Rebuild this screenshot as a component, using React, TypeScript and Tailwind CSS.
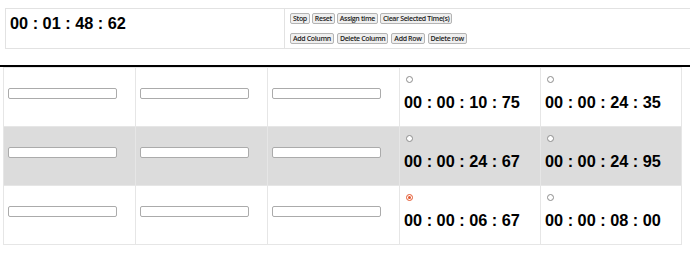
import type { ReactNode } from "react";

const rows = [
  { shade: false, times: ["00 : 00 : 10 : 75", "00 : 00 : 24 : 35"], picked: -1 },
  { shade: true, times: ["00 : 00 : 24 : 67", "00 : 00 : 24 : 95"], picked: -1 },
  { shade: false, times: ["00 : 00 : 06 : 67", "00 : 00 : 08 : 00"], picked: 0 },
];

function Btn({ children }: { children: ReactNode }) {
  return (
    <button className="h-[11px] px-[2px] border border-[#b4b4b4] rounded-[2px] bg-[#efefef] text-[7px] leading-none text-[#222] font-['Open_Sans',sans-serif] font-semibold tracking-[-0.35px]">
      {children}
    </button>
  );
}

function Radio({ on }: { on: boolean }) {
  return on ? (
    <span className="w-[7px] h-[7px] rounded-full border border-[#e4572e] grid place-items-center">
      <span className="w-[3px] h-[3px] rounded-full bg-[#e4572e]" />
    </span>
  ) : (
    <span className="w-[7px] h-[7px] rounded-full border border-[#8c8c8c] bg-white" />
  );
}

export default function App() {
  return (
    <div className="w-[690px] h-[257px] bg-white font-['Liberation_Sans',Arial,sans-serif] text-black overflow-hidden">
      <div className="pt-2 pl-[5px]">
        <div className="flex h-[41px] border border-[#e2e2e2] w-[690px]">
          <div className="w-[279px] border-r border-[#e2e2e2] pl-[4px] pt-[6px]">
            <div className="text-[16.3px] leading-none font-bold">00 : 01 : 48 : 62</div>
          </div>
          <div className="flex flex-col gap-[9px] pl-[5px] pt-[4px]">
            <div className="flex gap-[2px]">
              <Btn>Stop</Btn>
              <Btn>Reset</Btn>
              <Btn>Assign time</Btn>
              <Btn>Clear Selected Time(s)</Btn>
            </div>
            <div className="flex gap-[3px]">
              <Btn>Add Column</Btn>
              <Btn>Delete Column</Btn>
              <Btn>Add Row</Btn>
              <Btn>Delete row</Btn>
            </div>
          </div>
        </div>
      </div>

      <div className="mt-4 h-[2px] bg-black" />

      <div className="ml-[3px] w-[679px] grid grid-cols-[132px_132px_132px_141px_141px] border-l border-t border-[#e6e6e6]">
        {rows.map((r, i) => (
          <div key={i} className="contents">
            {[0, 1, 2].map((c) => (
              <div
                key={c}
                className={`h-[59px] border-r border-b border-[#e6e6e6] pl-[4px] pt-[20px] ${r.shade ? "bg-[#dcdcdc]" : "bg-white"}`}
              >
                <div className="w-[109px] h-[11px] border border-[#ababab] rounded-[2px] bg-white" />
              </div>
            ))}
            {r.times.map((t, k) => (
              <div
                key={k}
                className={`h-[59px] border-r border-b border-[#e6e6e6] pl-[4px] pt-[8px] ${r.shade ? "bg-[#dcdcdc]" : "bg-white"}`}
              >
                <div className="pl-[2px] h-[7px] flex">
                  <Radio on={r.picked === k} />
                </div>
                <div className="mt-[11px] text-[16.3px] leading-none font-bold">{t}</div>
              </div>
            ))}
          </div>
        ))}
      </div>
    </div>
  );
}
